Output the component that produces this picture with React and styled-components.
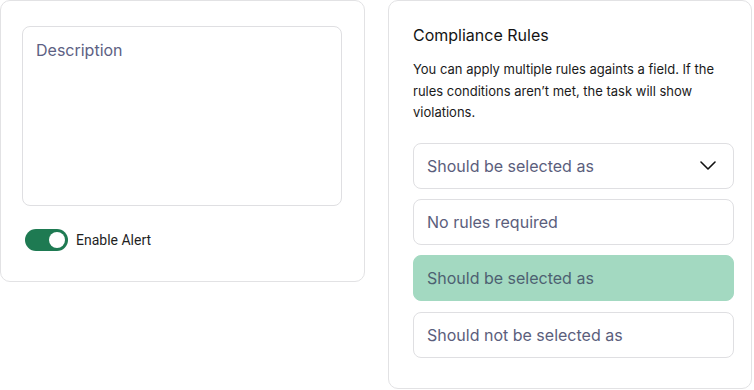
import React from "react";
import styled, { createGlobalStyle } from "styled-components";

const Global = createGlobalStyle`
  html, body { margin: 0; padding: 0; background: #ffffff; }
  * { box-sizing: border-box; }
  body { font-family: Inter, "Noto Sans", sans-serif; }
`;

const Page = styled.div`
  display: flex;
  align-items: flex-start;
  gap: 23px;
  width: 754px;
  height: 390px;
`;

const Card = styled.div`
  width: ${(p) => p.$w}px;
  border: 1px solid #e2e2e4;
  border-radius: 10px;
  background: #fff;
`;

const LeftCard = styled(Card)`
  padding: 25px 22px 30px 21px;
  display: flex;
  flex-direction: column;
  gap: 23px;
`;

const RightCard = styled(Card)`
  height: 389px;
  padding: 22px 17px 0 24px;
`;

const TextArea = styled.textarea`
  width: 320px;
  height: 180px;
  border: 1px solid #dfdfe2;
  border-radius: 8px;
  padding: 11px 13px;
  resize: none;
  font-family: Inter, sans-serif;
  font-size: 16px;
  line-height: 24px;
  color: #333;
  outline: none;
  &::placeholder { color: #5d6183; }
`;

const ToggleRow = styled.label`
  display: flex;
  align-items: center;
  gap: 8px;
  padding-left: 3px;
  font-family: Roboto, sans-serif;
  font-size: 14px;
  color: #1f1f1f;
`;

const Track = styled.span`
  position: relative;
  width: 43px;
  height: 22px;
  border-radius: 11px;
  background: ${(p) => (p.$on ? "#1e7a52" : "#c8c8c8")};
`;

const Knob = styled.span`
  position: absolute;
  top: 3px;
  ${(p) => (p.$on ? "right: 3px;" : "left: 3px;")}
  width: 16px;
  height: 16px;
  border-radius: 50%;
  background: #fff;
`;

const Title = styled.h2`
  margin: 0;
  font-size: 16px;
  font-weight: 400;
  line-height: 24px;
  color: #141414;
`;

const Desc = styled.p`
  margin: 12px 0 19px;
  font-size: 13px;
  line-height: 21.5px;
  color: #1a1a1a;
`;

const Options = styled.div`
  display: flex;
  flex-direction: column;
  gap: 10.4px;
`;

const Option = styled.div`
  height: 46px;
  border: 1px solid ${(p) => (p.$selected ? "#a3d9c1" : "#dfdfe2")};
  border-radius: 8px;
  background: ${(p) => (p.$selected ? "#a3d9c1" : "#fff")};
  display: flex;
  align-items: center;
  justify-content: space-between;
  padding: 0 17px 0 13px;
  font-size: 16px;
  color: ${(p) => (p.$selected ? "#4d6171" : "#5b5e7c")};
`;

const Chevron = () => (
  <svg width="16" height="9" viewBox="0 0 16 9" fill="none">
    <path d="M1 1l7 7 7-7" stroke="#111" strokeWidth="1.6" strokeLinecap="round" strokeLinejoin="round" />
  </svg>
);

export default function App() {
  return (
    <>
      <Global />
      <Page>
        <LeftCard $w={365}>
          <TextArea placeholder="Description" />
          <ToggleRow>
            <Track $on>
              <Knob $on />
            </Track>
            Enable Alert
          </ToggleRow>
        </LeftCard>
        <RightCard $w={364}>
          <Title>Compliance Rules</Title>
          <Desc>
            You can apply multiple rules againts a field. If the rules conditions aren’t met, the task will show
            violations.
          </Desc>
          <Options>
            <Option>
              Should be selected as
              <Chevron />
            </Option>
            <Option>No rules required</Option>
            <Option $selected>Should be selected as</Option>
            <Option>Should not be selected as</Option>
          </Options>
        </RightCard>
      </Page>
    </>
  );
}
